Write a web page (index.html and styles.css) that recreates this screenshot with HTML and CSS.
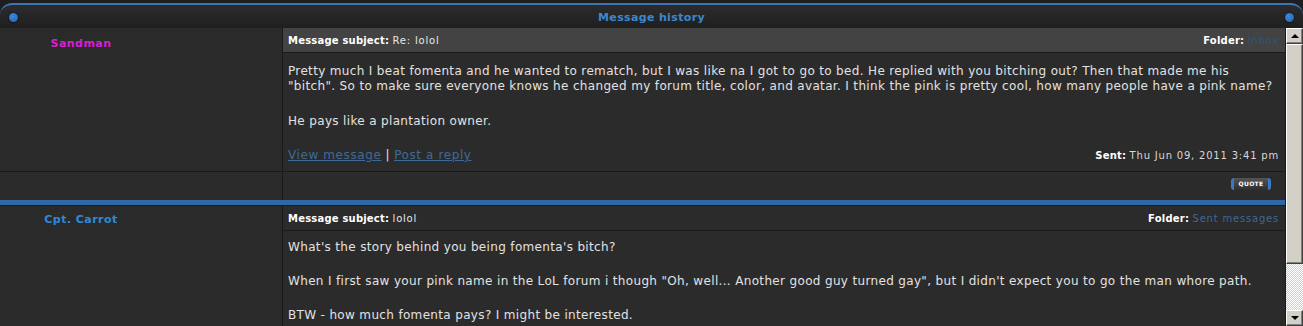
FILE: index.html
```html
<!DOCTYPE html>
<html>
<head>
<meta charset="utf-8">
<link rel="stylesheet" href="styles.css">
</head>
<body>
<div class="page">
  <div class="header">
    <div class="header-inner">
      <span class="dot"></span>
      <h2 class="title">Message history</h2>
      <span class="dot"></span>
    </div>
  </div>
  <div class="main">
    <div class="content">
      <div class="msg">
        <div class="author"><div class="name name-pink">Sandman</div></div>
        <div class="post">
          <div class="subject subject-light">
            <span><b>Message subject:</b> <span class="val">Re: lolol</span></span>
            <span><b>Folder:</b> <a class="folder folder-dim">Inbox</a></span>
          </div>
          <div class="body">
            <p>Pretty much I beat fomenta and he wanted to rematch, but I was like na I got to go to bed. He replied with you bitching out? Then that made me his "bitch". So to make sure everyone knows he changed my forum title, color, and avatar. I think the pink is pretty cool, how many people have a pink name?</p>
            <p>He pays like a plantation owner.</p>
          </div>
          <div class="foot">
            <span><a class="link">View message</a> | <a class="link">Post a reply</a></span>
            <span class="sent"><b>Sent:</b> <span class="val">Thu Jun 09, 2011 3:41 pm</span></span>
          </div>
        </div>
      </div>
      <div class="actions">
        <div class="author"></div>
        <div class="action-cell"><span class="quote">QUOTE</span></div>
      </div>
      <div class="sep"></div>
      <div class="msg msg-tight">
        <div class="author"><div class="name name-blue">Cpt. Carrot</div></div>
        <div class="post">
          <div class="subject">
            <span><b>Message subject:</b> <span class="val">lolol</span></span>
            <span><b>Folder:</b> <a class="folder">Sent messages</a></span>
          </div>
          <div class="body">
            <p>What's the story behind you being fomenta's bitch?</p>
            <p>When I first saw your pink name in the LoL forum i though "Oh, well... Another good guy turned gay", but I didn't expect you to go the man whore path.</p>
            <p>BTW - how much fomenta pays? I might be interested.</p>
          </div>
        </div>
      </div>
    </div>
    <div class="scrollbar">
      <div class="sb-btn"><span class="arrow-up"></span></div>
      <div class="sb-thumb"></div>
      <div class="sb-track"></div>
      <div class="sb-btn"><span class="arrow-down"></span></div>
    </div>
  </div>
</div>
</body>
</html>
```
FILE: styles.css
```css
* { box-sizing: border-box; }
html, body { margin: 0; padding: 0; }
body {
  background: #1d1d1d;
  font-family: "DejaVu Sans", Verdana, sans-serif;
  font-size: 12px;
  letter-spacing: 0.34px;
  color: #e2e2e2;
  width: 1303px;
  height: 326px;
  overflow: hidden;
}
.page { display: flex; flex-direction: column; height: 326px; }
.header {
  height: 28px;
  background: #1e1e1e;
  padding-top: 3px;
}
.header-inner {
  height: 25px;
  border-top: 2px solid #3f74b4;
  border-radius: 12px 12px 0 0;
  background: linear-gradient(#2c2c2c, #1f1f1f);
  display: flex;
  align-items: center;
  padding: 2px 9px 0 9px;
}
.dot {
  width: 9px; height: 9px; border-radius: 50%;
  background: radial-gradient(circle at 40% 40%, #3a8ae0, #1f5fa8);
  box-shadow: 0 0 2px #000;
}
.title {
  flex: 1;
  margin: 0;
  text-align: center;
  font-size: 11px;
  letter-spacing: 0.35px;
  font-weight: bold;
  color: #3c87cf;
}
.main { display: flex; height: 298px; }
.content {
  flex: 1;
  overflow: hidden;
  background: #2b2b2b;
  border-right: 1px solid #1a1a1a;
}
.msg, .actions { display: flex; }
.author {
  width: 283px;
  flex: none;
  border-right: 1px solid #1a1a1a;
  background: #2a2a2a;
}
.name {
  width: 162px;
  text-align: center;
  font-weight: bold;
  font-size: 11px;
  letter-spacing: 0.45px;
  padding-top: 9px;
}
.name-pink { color: #d61fd6; }
.name-blue { color: #2e8ad6; }
.post { flex: 1; }
.subject {
  height: 25px;
  display: flex;
  justify-content: space-between;
  align-items: center;
  padding: 0 6px 0 5px;
  border-bottom: 1px solid #1b1b1b;
  font-size: 10px;
  letter-spacing: 0.2px;
  color: #e8e8e8;
}
.subject-light { background: #434343; }
.subject b, .sent b { color: #fff; }
.val { letter-spacing: 0.8px; }
.folder { color: #3a6a9a; letter-spacing: 0.8px; }
.folder-dim { color: #2e5478; }
.body { padding: 11px 5px 0 5px; line-height: 15px; }
.body p { margin: 0 0 20px 0; }
.msg-tight .name { padding-top: 7px; }
.msg-tight .body { padding-top: 9px; }
.msg-tight .body p { margin-bottom: 19px; }
.foot {
  display: flex;
  justify-content: space-between;
  align-items: center;
  padding: 0 6px 8px 5px;
  margin-top: -1px;
  line-height: 15px;
}
.link { color: #3d6b99; text-decoration: underline; letter-spacing: 0.6px; }
.sent { font-size: 10px; letter-spacing: 0.2px; color: #d8d8d8; }
.actions { border-top: 1px solid #1a1a1a; height: 29px; }
.action-cell {
  flex: 1;
  display: flex;
  justify-content: flex-end;
  align-items: flex-start;
  padding: 6px 14px 0 0;
}
.quote {
  width: 40px; height: 12px;
  border-radius: 3px;
  border-left: 3px solid #3a78c4;
  border-right: 3px solid #3a78c4;
  background: linear-gradient(#555, #2e2e2e);
  color: #fff;
  font-size: 6px;
  font-weight: bold;
  line-height: 12px;
  text-align: center;
  letter-spacing: 0.3px;
}
.sep { height: 6px; background: #2e68a6; border-bottom: 1px solid #1a1a1a; }
.scrollbar {
  width: 17px;
  flex: none;
  display: flex;
  flex-direction: column;
}
.sb-btn, .sb-thumb {
  background: #d4d0c8;
  border-top: 1px solid #fff;
  border-left: 1px solid #fff;
  border-right: 1px solid #404040;
  border-bottom: 1px solid #404040;
  box-shadow: inset -1px -1px 0 #808080;
}
.sb-btn {
  height: 16px;
  display: flex;
  align-items: center;
  justify-content: center;
}
.sb-thumb { height: 220px; }
.sb-track {
  flex: 1;
  background-color: #fff;
  background-image: conic-gradient(#d4d0c8 25%, #fff 0 50%, #d4d0c8 0 75%, #fff 0);
  background-size: 2px 2px;
}
.arrow-up, .arrow-down { width: 0; height: 0; border-left: 4px solid transparent; border-right: 4px solid transparent; }
.arrow-up { border-bottom: 4px solid #000; }
.arrow-down { border-top: 4px solid #000; }
```
